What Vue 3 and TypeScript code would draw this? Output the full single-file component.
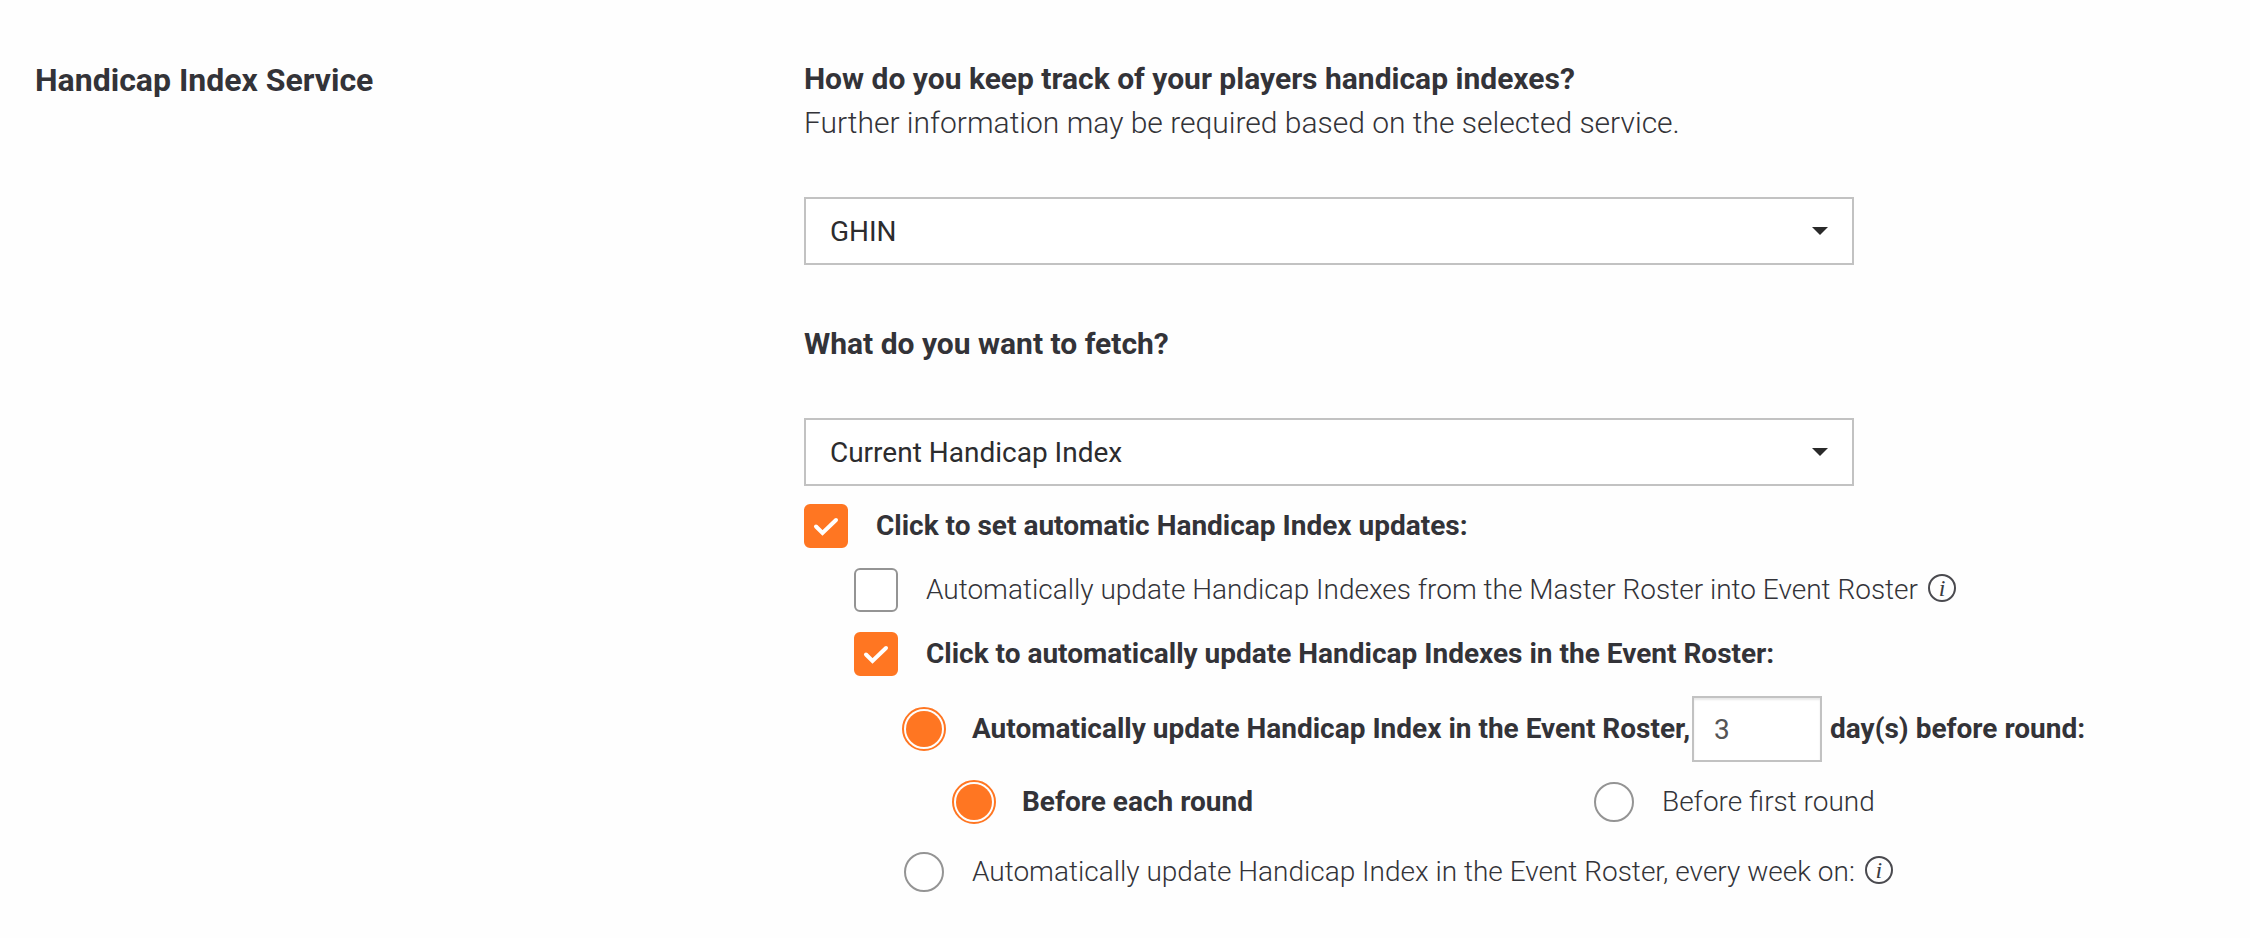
<script setup lang="ts">
import { ref } from 'vue'

type Schedule = 'days-before' | 'weekly'
type Round = 'each' | 'first'

const services: string[] = ['GHIN', 'Golf Canada', 'Manual entry']
const fetchOptions: string[] = ['Current Handicap Index', 'Low Handicap Index']

const service = ref<string>('GHIN')
const fetchWhat = ref<string>('Current Handicap Index')
const autoUpdates = ref<boolean>(true)
const fromMaster = ref<boolean>(false)
const inEvent = ref<boolean>(true)
const schedule = ref<Schedule>('days-before')
const days = ref<string>('3')
const round = ref<Round>('each')
</script>

<template>
  <section class="settings">
    <h2 class="title">Handicap Index Service</h2>

    <div class="content">
      <label class="question" for="service">How do you keep track of your players handicap indexes?</label>
      <p class="hint">Further information may be required based on the selected service.</p>
      <div class="dropdown">
        <select id="service" v-model="service">
          <option v-for="s in services" :key="s" :value="s">{{ s }}</option>
        </select>
        <svg class="caret" viewBox="0 0 16 8" aria-hidden="true"><path d="M0 0h16L8 8z" /></svg>
      </div>

      <label class="question second" for="fetch">What do you want to fetch?</label>
      <div class="dropdown">
        <select id="fetch" v-model="fetchWhat">
          <option v-for="f in fetchOptions" :key="f" :value="f">{{ f }}</option>
        </select>
        <svg class="caret" viewBox="0 0 16 8" aria-hidden="true"><path d="M0 0h16L8 8z" /></svg>
      </div>

      <div class="updates">
        <div class="row">
          <span class="check">
            <input id="auto" v-model="autoUpdates" type="checkbox" />
            <svg v-if="autoUpdates" class="tick" viewBox="0 0 44 44" aria-hidden="true"><path d="M12 22.5 18.5 29 32 16" /></svg>
          </span>
          <label class="text" :class="{ on: autoUpdates }" for="auto">Click to set automatic Handicap Index updates:</label>
        </div>

        <div class="nested">
          <div class="row">
            <span class="check">
              <input id="master" v-model="fromMaster" type="checkbox" />
              <svg v-if="fromMaster" class="tick" viewBox="0 0 44 44" aria-hidden="true"><path d="M12 22.5 18.5 29 32 16" /></svg>
            </span>
            <label class="text" :class="{ on: fromMaster }" for="master">Automatically update Handicap Indexes from the Master Roster into Event Roster</label>
            <button class="info" type="button">i</button>
          </div>

          <div class="row">
            <span class="check">
              <input id="event" v-model="inEvent" type="checkbox" />
              <svg v-if="inEvent" class="tick" viewBox="0 0 44 44" aria-hidden="true"><path d="M12 22.5 18.5 29 32 16" /></svg>
            </span>
            <label class="text" :class="{ on: inEvent }" for="event">Click to automatically update Handicap Indexes in the Event Roster:</label>
          </div>

          <div class="schedules">
            <div class="row">
              <input id="days-before" v-model="schedule" type="radio" name="schedule" value="days-before" />
              <label class="text" :class="{ on: schedule === 'days-before' }" for="days-before">Automatically update Handicap Index in the Event Roster,</label>
              <input id="days" v-model="days" class="days" type="text" inputmode="numeric" />
              <label class="text unit" :class="{ on: schedule === 'days-before' }" for="days">day(s) before round:</label>
            </div>

            <div class="rounds">
              <div class="row">
                <input id="each" v-model="round" type="radio" name="round" value="each" />
                <label class="text" :class="{ on: round === 'each' }" for="each">Before each round</label>
              </div>
              <div class="row">
                <input id="first" v-model="round" type="radio" name="round" value="first" />
                <label class="text" :class="{ on: round === 'first' }" for="first">Before first round</label>
              </div>
            </div>

            <div class="row">
              <input id="weekly" v-model="schedule" type="radio" name="schedule" value="weekly" />
              <label class="text" :class="{ on: schedule === 'weekly' }" for="weekly">Automatically update Handicap Index in the Event Roster, every week on:</label>
              <button class="info" type="button">i</button>
            </div>
          </div>
        </div>
      </div>
    </div>
  </section>
</template>

<style scoped>
.settings {
  display: grid;
  grid-template-columns: 7fr 13fr;
  padding: 57px 18px 40px 35px;
  font-family: Roboto, "Open Sans", sans-serif;
  color: #333338;
}

.title {
  margin: 0;
  font-size: 32px;
  line-height: 46px;
  font-weight: 700;
}

.question,
.hint {
  display: block;
  margin: 0;
  font-size: 30px;
  line-height: 44px;
}

.question {
  font-weight: 700;
}

.hint {
  font-weight: 300;
}

.second {
  margin-top: 57px;
}

.dropdown {
  position: relative;
  width: 73.5%;
  margin-top: 52px;
}

.dropdown select {
  display: block;
  width: 100%;
  height: 68px;
  padding: 0 60px 0 24px;
  border: 2px solid #c2c2c2;
  border-radius: 0;
  background: #fff;
  color: #2c2c2e;
  font: 400 28px Roboto, "Open Sans", sans-serif;
  appearance: none;
}

.caret {
  position: absolute;
  top: 30px;
  right: 26px;
  width: 16px;
  height: 8px;
  fill: #2a2a2a;
  pointer-events: none;
}

.updates {
  margin-top: 18px;
}

.nested {
  display: grid;
  gap: 20px;
  margin: 20px 0 0 50px;
}

.row {
  display: flex;
  align-items: center;
  min-height: 44px;
}

.check {
  position: relative;
  display: block;
  flex: none;
  width: 44px;
  height: 44px;
  margin-right: 2px;
}

.check input {
  display: block;
  width: 44px;
  height: 44px;
  margin: 0;
  border: 2px solid #949494;
  border-radius: 6px;
  background: #fff;
  appearance: none;
}

.check input:checked {
  border-color: #ff7622;
  background: #ff7622;
}

.tick {
  position: absolute;
  inset: 0;
  width: 44px;
  height: 44px;
  fill: none;
  stroke: #fff;
  stroke-width: 4;
  stroke-linecap: round;
  pointer-events: none;
}

input[type="radio"] {
  flex: none;
  width: 40px;
  height: 40px;
  margin: 2px;
  border: 2px solid #949494;
  border-radius: 50%;
  background: #fff;
  appearance: none;
}

input[type="radio"]:checked {
  width: 44px;
  height: 44px;
  margin: 0;
  padding: 2px;
  border-color: #ff7622;
  background: #ff7622 content-box;
}

.text {
  margin-left: 26px;
  font-size: 28px;
  line-height: 40px;
  font-weight: 300;
}

.text.on {
  font-weight: 700;
}

.schedules {
  display: grid;
  margin-left: 48px;
}

.days {
  box-sizing: border-box;
  width: 130px;
  height: 66px;
  margin-left: 2px;
  padding: 0 20px;
  border: 2px solid #c2c2c2;
  border-radius: 0;
  background: #fff;
  box-shadow: inset 0 2px 2px #e8e8e8;
  color: #555;
  font: 400 28px Roboto, "Open Sans", sans-serif;
}

.text.unit {
  margin-left: 8px;
}

.rounds {
  display: grid;
  grid-template-columns: 1fr 1fr;
  margin: 18px 0 26px 50px;
}

.info {
  display: grid;
  place-items: center;
  flex: none;
  width: 28px;
  height: 28px;
  margin: 0 0 4px 10px;
  padding: 0;
  border: 2px solid #4a4a4f;
  border-radius: 50%;
  background: none;
  color: #3a3a3f;
  font: italic 24px "Liberation Serif", serif;
  line-height: 22px;
}
</style>

<style>
body {
  margin: 0;
  background: #fefefe;
}
</style>
